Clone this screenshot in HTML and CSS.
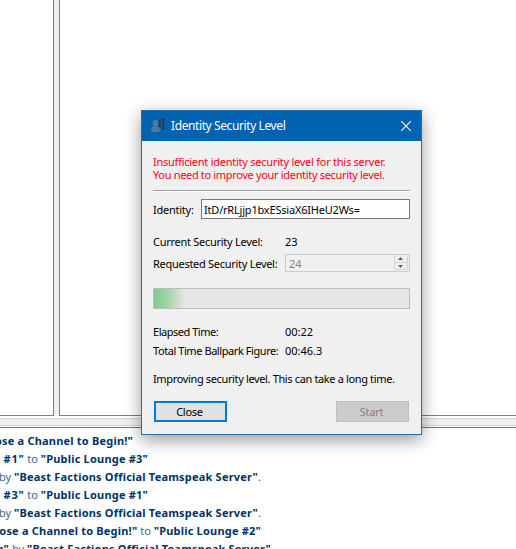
FILE: index.html
```html
<!DOCTYPE html>
<html lang="en">
<head>
<meta charset="utf-8">
<title>Identity Security Level</title>
<link rel="stylesheet" href="styles.css">
</head>
<body>
<main class="app">
  <div class="panes"><div class="pane tree"></div><div class="pane info"></div></div>
  <div class="splitter"></div>
  <div class="log">
    <p class="w1"><b>oose a Channel to Begin!"</b></p>
    <p class="w2"><b class="num">#1"</b> to <b>"Public Lounge #3"</b></p>
    <p class="w3">by <b>"Beast Factions Official Teamspeak Server"</b>.</p>
    <p class="w2"><b class="num">#3"</b> to <b>"Public Lounge #1"</b></p>
    <p class="w3">by <b>"Beast Factions Official Teamspeak Server"</b>.</p>
    <p class="w4"><b>oose a Channel to Begin!"</b> to <b>"Public Lounge #2"</b></p>
    <p class="w5"><b>g"</b> by <b>"Beast Factions Official Teamspeak Server"</b></p>
  </div>
</main>
<section class="dialog">
  <header class="titlebar">
    <svg class="logo" width="15" height="15" viewBox="0 0 15 15"><path fill="#303c4b" d="M7 2.500L9.500 1.500 10 4 9 6.500 10.500 9 9 10 7.500 7.500 8 4.500zM10.500 1l3-1 .7 1.500-1.500 2.500 1 2L12.500 8l1.500 2.500-1 2L11 11l.5-3-1-2 1-2.500z"/><circle cx="4.500" cy="5" r="2.900" fill="#557799"/><path fill="#557799" d="M.3 14v-3.500Q.3 9 3 8.500L3.500 7h2L6 8.500q2.700.5 2.700 2V14z"/></svg>
    <h1>Identity Security Level</h1>
    <svg class="x" width="10" height="10" viewBox="0 0 10 10"><path d="M.3.3l9.400 9.400M9.700.3L.3 9.700" stroke="#fff" stroke-width="1.100"/></svg>
  </header>
  <div class="content">
    <div class="warning"><span class="t1">Insufficient identity security level for this server.</span><br><span class="t2">You need to improve your identity security level.</span></div>
    <hr>
    <div class="identity"><label class="t3">Identity:</label><div class="field"><span class="t4">ItD/rRLjjp1bxESsiaX6IHeU2Ws=</span></div></div>
    <div class="row current"><span class="t5">Current Security Level:</span><span>23</span></div>
    <div class="row requested"><span class="t6">Requested Security Level:</span>
      <div class="spin"><span>24</span><div class="arrows"><svg width="14" height="15" viewBox="0 0 14 15"><path d="M.5 0v14.500h13V0M0 7.500h14" fill="none" stroke="#d4d4d4"/><path d="M4 5h5L6.500 2zM4 10h5l-2.500 3z" fill="#606060"/></svg></div></div>
    </div>
    <div class="progress"><div class="chunk"></div></div>
    <div class="row elapsed"><span class="t7">Elapsed Time:</span><span>00:22</span></div>
    <div class="row total"><span class="t8">Total Time Ballpark Figure:</span><span>00:46.3</span></div>
    <div class="status t9">Improving security level. This can take a long time.</div>
    <footer><button class="close">Close</button><button class="start" disabled>Start</button></footer>
  </div>
</section>
</body>
</html>
```
FILE: styles.css
```css
* { box-sizing: border-box; }
body { margin: 0; width: 516px; height: 549px; overflow: hidden; background: #fff; font: 11px/13px "Noto Sans", sans-serif; color: #000; }
.app { height: 549px; display: flex; flex-direction: column; background: #fff; }
.panes { height: 416px; display: flex; gap: 5px; background: #efefef; }
.pane { background: #fff; border: solid #7c7e82; }
.tree { width: 54px; border-width: 0 1px 1px 0; }
.info { flex: 1; border-width: 0 0 1px 1px; }
.splitter { height: 12px; border: solid #fff; border-width: 2px 0 0; background: linear-gradient(#d4d4d4 1px, #efefef 1px 7px, #d4d4d4 7px 8px, #fff 8px 9px, #727272 9px); }
.log { flex: 1; padding-top: 4px; color: #41658b; overflow: hidden; }
.log p { margin: 0; height: 18px; line-height: 18px; display: flex; justify-content: flex-end; white-space: pre; }
.log b { color: #003366; font-weight: 700; letter-spacing: .2px; }
.log .num { letter-spacing: .7px; }
.w1 { width: 133px; }
.w2 { width: 148px; }
.w3 { width: 261px; }
.w4 { width: 261px; }
.w5 { width: 271px; }
.dialog { position: absolute; left: 141px; top: 110px; width: 281px; height: 325px; background: #f0f0f0; border: 1px solid #1f70ad; box-shadow: 0 5px 16px rgba(0,0,0,.4); }
.titlebar { height: 30px; padding: 0 10px 0 9px; display: flex; align-items: center; background: #0063b1; color: #fff; }
.logo { margin-top: -1px; }
.titlebar h1 { flex: 1; margin: -1px 0 0 5px; font-size: 12px; font-weight: 400; letter-spacing: -.4px; }
.content { padding: 14px 11px 0; height: 293px; white-space: nowrap; }
.warning { color: #ff0018; height: 27px; }
hr { height: 2px; margin: 8px 0 0; border: 0; background: linear-gradient(#a0a0a0 1px, #fff 1px); }
.identity { display: flex; align-items: center; margin-top: 7px; }
.identity label { width: 48px; }
.field { width: 209px; height: 20px; border: 1px solid #7a7a7a; background: #fff; padding: 3px 2px; line-height: 14px; }
.row { display: flex; align-items: center; }
.row > span:first-child { width: 132px; }
.current { margin-top: 16px; height: 13px; }
.requested { margin-top: 6px; height: 18px; }
.spin { width: 125px; height: 18px; border: 1px solid #ccc; padding: 0 1px 0 3px; display: flex; justify-content: space-between; align-items: center; color: #838383; }
.arrows { width: 14px; height: 16px; }
.arrows svg { display: block; }
.progress { margin-top: 16px; height: 21px; border: 1px solid #bcbcbc; background: #e6e6e6; }
.chunk { width: 31px; height: 19px; background: linear-gradient(90deg, #7fcb8b, #9dd3a5 40%, #e6e6e6); }
.elapsed { margin-top: 16px; height: 13px; }
.total { margin-top: 6px; height: 13px; }
.status { margin-top: 15px; height: 13px; }
footer { display: flex; justify-content: space-between; margin-top: 16px; padding: 0 1px; }
button { width: 73px; height: 21px; padding: 0 2px 0 0; font: inherit; letter-spacing: -.25px; color: #000; background: #e1e1e1; border: 2px solid #0078d7; }
button:disabled { color: #838383; background: #ccc; border: 1px solid #bfbfbf; }
.t1 { letter-spacing: -.25px; }
.t2 { letter-spacing: -.33px; }
.t3 { letter-spacing: -.25px; }
.t4 { letter-spacing: -.2px; }
.t5 { letter-spacing: -.27px; }
.t6 { letter-spacing: -.28px; }
.t7 { letter-spacing: -.48px; }
.t8 { letter-spacing: -.43px; }
.t9 { letter-spacing: -.36px; }
```
